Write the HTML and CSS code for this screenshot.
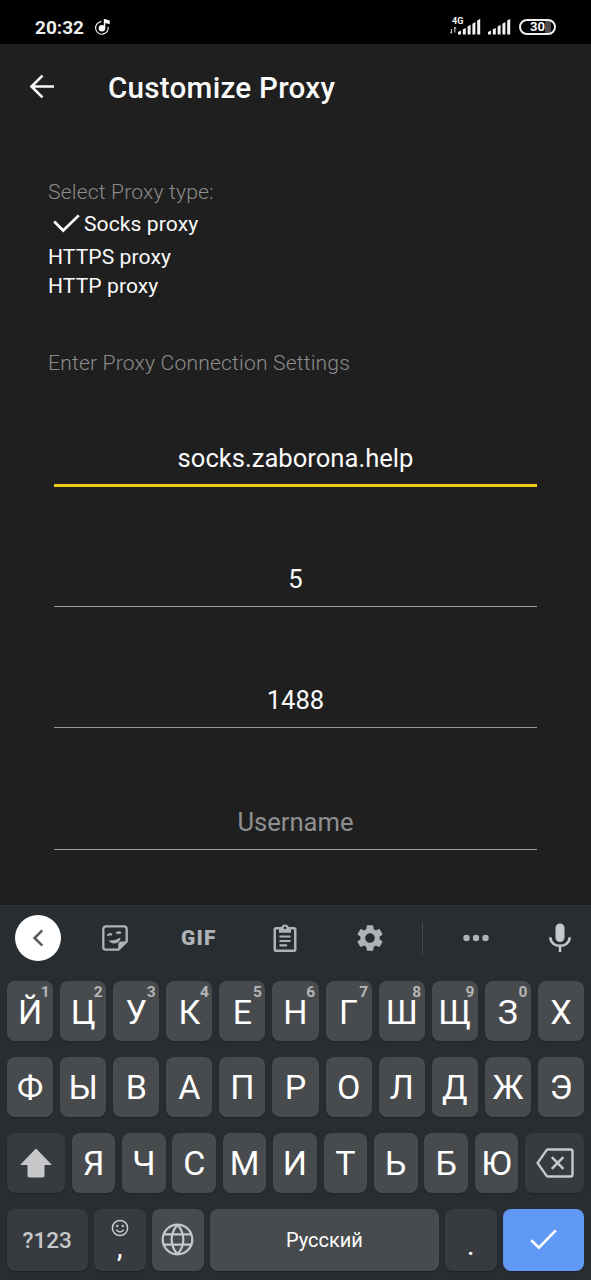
FILE: index.html
```html
<!DOCTYPE html>
<html lang="en">
<head>
<meta charset="utf-8">
<title>Customize Proxy</title>
<link rel="stylesheet" href="styles.css">
</head>
<body>
<div class="status">
  <span class="clock">20:32</span>
  <svg class="music" width="16" height="18" viewBox="0 0 16 18"><path d="M6.5 3.6a6.3 6.3 0 1 0 6.6 5.2" fill="none" stroke="#fff" stroke-width="1.1"/><circle cx="7" cy="10.2" r="3.3" fill="#fff"/><path d="M8.8 10V.8l5.9 1.7v3.8L10.3 5v5z" fill="#fff"/></svg>
  <div class="network">
    <span class="gen">4G</span>
    <svg width="7" height="9" viewBox="0 0 7 9"><path d="M1.5 3v4M4.8 1v5.5" stroke="#ccc" stroke-width="1.1"/><path d="M0 5.5 1.5 7.5M6.3 3 4.8 1" stroke="#ccc" stroke-width="1"/></svg>
  </div>
  <svg class="signal" width="23" height="17" viewBox="0 0 23 17"><path d="M0 16.5V14l3-1.5v4zM4.800 16.500v-5.200l3-1.400v6.600zM9.600 16.500V8.500l3-1.800v9.800zM14.400 16.500V5.800l3-1.800v12.500zM19.200 16.500V2.600l3-1.800v15.700z" fill="#f2f2f2"/></svg>
  <svg class="signal second" width="23" height="17" viewBox="0 0 23 17"><path d="M0 16.500V14l3-1.500v4zM4.800 16.500v-5.200l3-1.400v6.600zM9.600 16.500V8.500l3-1.800v9.800zM14.400 16.500V5.800l3-1.800v12.500zM19.200 16.500V2.600l3-1.800v15.700z" fill="#f2f2f2"/></svg>
  <div class="battery"><span class="charge">30</span></div>
</div>
<header class="bar">
  <svg class="back" width="26" height="26" viewBox="0 0 26 26"><path d="M25 12.500H3M13.500 1.600 2.500 12.500l11 10.900" fill="none" stroke="#f7f7f7" stroke-width="2.700"/></svg>
  <h1 class="title">Customize Proxy</h1>
</header>
<main class="page">
  <p class="label">Select Proxy type:</p>
  <ul class="types">
    <li class="type chosen"><svg width="27" height="19" viewBox="0 0 27 19"><path d="m1.200 7.500 9 9L25.800 1.400" fill="none" stroke="#fff" stroke-width="2.700"/></svg>Socks proxy</li>
    <li class="type">HTTPS proxy</li>
    <li class="type">HTTP proxy</li>
  </ul>
  <p class="label settings">Enter Proxy Connection Settings</p>
  <div class="field active">socks.zaborona.help</div>
  <div class="field">5</div>
  <div class="field">1488</div>
  <div class="field hint">Username</div>
</main>
<section class="keyboard" lang="ru">
  <div class="tools">
    <span class="collapse"><svg width="12" height="18" viewBox="0 0 12 18"><path d="M10.300 1.400 2.600 9l7.700 7.600" fill="none" stroke="#5b5d5f" stroke-width="2.600"/></svg></span>
    <svg class="tool sticker" width="26" height="26" viewBox="0 0 26 26"><path d="M4 1.300h18a2.700 2.700 0 0 1 2.700 2.700v12.500l-8.200 8.200H4A2.700 2.700 0 0 1 1.300 22V4A2.700 2.700 0 0 1 4 1.300z" fill="none" stroke="#b0b3b5" stroke-width="2.300"/><path d="M16.300 25v-5.500a3 3 0 0 1 3-3H25zM6.800 15.200q6.500 1 11.700-2.600c-.2 6.600-9 8-11.700 2.600z" fill="#b0b3b5"/><path d="M5.700 10.800q1.500-2.600 4.200-1M14.500 8.600q2-2.400 4.300-.3" fill="none" stroke="#b0b3b5" stroke-width="2.300"/></svg>
    <span class="gif">GIF</span>
    <svg class="tool clipboard" width="24" height="29" viewBox="0 0 24 29"><path fill-rule="evenodd" d="M3 3h5.300a4 4 0 0 1 7.400 0H21a2.500 2.500 0 0 1 2.500 2.500v20A2.500 2.500 0 0 1 21 28H3a2.500 2.500 0 0 1-2.500-2.500v-20A2.500 2.500 0 0 1 3 3zm0 2.500v20h18v-20h-3v3.200H6V5.500zM12 2.500a1.400 1.400 0 1 0 .01 0z" fill="#b0b3b5"/><path d="M6.500 12.500h11M6.500 17h11M6.500 21.400h7.500" stroke="#b0b3b5" stroke-width="2.100"/></svg>
    <svg class="tool gear" width="32" height="32" viewBox="0 0 24 24"><path fill="#b0b3b5" d="M19.140 12.940c.04-.3.06-.61.06-.94 0-.32-.02-.64-.07-.94l2.030-1.580c.18-.14.23-.41.12-.61l-1.920-3.320c-.12-.22-.37-.29-.59-.22l-2.390.96c-.5-.38-1.030-.7-1.620-.94l-.36-2.540c-.04-.24-.24-.41-.48-.41h-3.840c-.24 0-.43.17-.47.41l-.36 2.540c-.59.24-1.130.57-1.620.94l-2.390-.96c-.22-.08-.47 0-.59.22L2.740 8.870c-.12.21-.08.47.12.61l2.030 1.580c-.05.3-.09.63-.09.94s.02.64.07.94l-2.030 1.580c-.18.14-.23.41-.12.61l1.920 3.320c.12.22.37.29.59.22l2.390-.96c.5.38 1.030.7 1.620.94l.36 2.540c.05.24.24.41.48.41h3.840c.24 0 .44-.17.47-.41l.36-2.540c.59-.24 1.130-.56 1.620-.94l2.390.96c.22.08.47 0 .59-.22l1.920-3.320c.12-.22.07-.47-.12-.61l-2.010-1.580zM12 15.600c-1.980 0-3.600-1.620-3.600-3.600s1.620-3.600 3.600-3.600 3.600 1.620 3.600 3.600-1.620 3.600-3.600 3.600z"/></svg>
    <span class="rule"></span>
    <svg class="tool dots" width="26" height="8" viewBox="0 0 26 8"><g fill="#b0b3b5"><circle cx="3.500" cy="4" r="3.200"/><circle cx="13" cy="4" r="3.200"/><circle cx="22.500" cy="4" r="3.200"/></g></svg>
    <svg class="tool mic" width="22" height="30" viewBox="0 0 22 30"><rect x="6.500" y=".5" width="9" height="18.500" rx="4.500" fill="#c6c8ca"/><path d="M1.300 14.300c0 11.300 19.400 11.300 19.400 0M11 22.500V29" fill="none" stroke="#c6c8ca" stroke-width="2.500"/></svg>
  </div>
  <div class="keys eleven numbered">
    <div class="key">Й<sup class="alt">1</sup></div><div class="key">Ц<sup class="alt">2</sup></div><div class="key">У<sup class="alt">3</sup></div><div class="key">К<sup class="alt">4</sup></div><div class="key">Е<sup class="alt">5</sup></div><div class="key">Н<sup class="alt">6</sup></div><div class="key">Г<sup class="alt">7</sup></div><div class="key">Ш<sup class="alt">8</sup></div><div class="key">Щ<sup class="alt">9</sup></div><div class="key">З<sup class="alt">0</sup></div><div class="key">Х</div>
  </div>
  <div class="keys eleven">
    <div class="key">Ф</div><div class="key">Ы</div><div class="key">В</div><div class="key">А</div><div class="key">П</div><div class="key">Р</div><div class="key">О</div><div class="key">Л</div><div class="key">Д</div><div class="key">Ж</div><div class="key">Э</div>
  </div>
  <div class="keys shifted">
    <div class="key dark"><svg width="32" height="30" viewBox="0 0 32 30"><path d="M16 1 31 16.500h-7V28q0 1-1 1H9q-1 0-1-1V16.500H1z" fill="#c6c8ca" stroke="#c6c8ca" stroke-width="1" stroke-linejoin="round"/></svg></div>
    <div class="key">Я</div><div class="key">Ч</div><div class="key">С</div><div class="key">М</div><div class="key">И</div><div class="key">Т</div><div class="key">Ь</div><div class="key">Б</div><div class="key">Ю</div>
    <div class="key dark"><svg width="38" height="30" viewBox="0 0 38 30"><path d="M12 1.500h22.500a2 2 0 0 1 2 2v23a2 2 0 0 1-2 2H12q-1 0-1.600-.9L1.600 15l8.800-12.600q.6-.9 1.600-.9z" fill="none" stroke="#c6c8ca" stroke-width="2.400"/><path d="m15.800 9.200 11.600 11.600m0-11.600L15.800 20.800" stroke="#c6c8ca" stroke-width="2.500"/></svg></div>
  </div>
  <div class="keys bottom">
    <div class="key dark mode">?123</div>
    <div class="key dark comma"><svg width="18" height="18" viewBox="0 0 18 18"><circle cx="9" cy="9" r="7.600" fill="none" stroke="#c6c8ca" stroke-width="1.500"/><circle cx="6.300" cy="7" r="1.200" fill="#c6c8ca"/><circle cx="11.700" cy="7" r="1.200" fill="#c6c8ca"/><path d="M5.200 10.800q3.800 4.400 7.600 0" fill="none" stroke="#c6c8ca" stroke-width="1.500"/></svg><span class="mark">,</span></div>
    <div class="key"><svg width="33" height="33" viewBox="0 0 33 33"><g fill="none" stroke="#c6c8ca" stroke-width="2.200"><circle cx="16.500" cy="16.500" r="14.800"/><path d="M3 11.300h27M3 21.700h27M16.500 1.700c-7.800 9-7.800 20.600 0 29.600M16.500 1.700c7.800 9 7.800 20.600 0 29.600"/></g></svg></div>
    <div class="key space">Русский</div>
    <div class="key dark dot"><span class="mark">.</span></div>
    <div class="key enter"><svg width="27" height="21" viewBox="0 0 27 21"><path d="m1.200 11.200 7.700 7.500L25.800 1.400" fill="none" stroke="#fff" stroke-width="2.700"/></svg></div>
  </div>
</section>
</body>
</html>
```

FILE: styles.css
```css
* { box-sizing: border-box; }

body {
  margin: 0;
  width: 591px;
  height: 1280px;
  display: flex;
  flex-direction: column;
  overflow: hidden;
  background: #1f1f1f;
  color: #fafafa;
  font-family: Roboto, "Noto Sans", sans-serif;
}

svg { display: block; flex: none; }

.status {
  height: 44px;
  flex: none;
  display: flex;
  align-items: flex-start;
  padding-left: 35px;
  background: #000;
}
.clock { width: 60px; font-size: 19px; line-height: 22px; font-weight: 700; margin-top: 17px; color: #eee; }
.music { margin-top: 18px; }
.network { margin: 17px 0 0 339px; width: 8px; display: flex; flex-direction: column; }
.gen { margin-left: 2px; font-size: 9px; line-height: 9px; font-weight: 700; }
.signal { margin: 18px 0 0; }
.second { margin-left: 7px; }
.battery {
  width: 37px;
  height: 16px;
  margin: 19px 0 0 8px;
  padding: 1px;
  border: 2px solid #f0f0f0;
  border-radius: 8px;
  background: linear-gradient(90deg, #000 72%, #4c4c4c 72% 92%, #000 92%);
  display: flex;
  align-items: center;
  justify-content: center;
}
.charge { font-size: 13px; line-height: 12px; font-weight: 700; }

.bar { height: 87px; flex: none; display: flex; align-items: center; padding-left: 29px; border-bottom: 1px solid #1c1c1c; }
.title { margin: 2px 0 0 53px; font-size: 29.6px; line-height: 36px; font-weight: 500; letter-spacing: .26px; }

.page { flex: none; height: 774px; padding: 48px 48px 0; font-size: 21.1px; line-height: 26px; }
.label { margin: 0; color: #8c8c8c; font-weight: 300; letter-spacing: .17px; }
.types { margin: 0; padding: 0; list-style: none; letter-spacing: .07px; }
.type { height: 29px; line-height: 29px; }
.chosen { height: 37px; padding-left: 5px; display: flex; align-items: center; gap: 4px; }
.settings { margin-top: 50px; }
.field {
  height: 43px;
  margin: 78.400px 6px 0;
  padding-bottom: 12px;
  border-bottom: 1px solid #999;
  font-size: 25.6px;
  line-height: 30px;
  text-align: center;
}
.active { height: 44px; margin-top: 67px; border-bottom: 3px solid #f2ca1a; }
.active + .field { margin-top: 77px; }
.hint { color: #8f8f8f; }

.keyboard {
  flex: 1;
  display: flex;
  flex-direction: column;
  gap: 15.500px;
  padding: 0 7px 9px;
  border-top: 2px solid #2f3133;
  background: #282d31;
}
.tools { height: 58px; flex: none; display: flex; align-items: center; padding: 4px 0 0 8px; }
.collapse { width: 46px; height: 46px; border-radius: 50%; background: #fff; display: flex; align-items: center; justify-content: center; }
.sticker { margin-left: 41px; }
.gif { width: 37px; margin-left: 53px; font-size: 21px; line-height: 24px; font-weight: 900; letter-spacing: 1.200px; color: #b0b3b5; }
.clipboard { margin-left: 55px; }
.gear { margin-left: 57px; }
.rule { width: 1px; height: 33px; margin-left: 36px; background: #41464f; }
.dots { margin-left: 40px; }
.mic { margin-left: 60px; }

.keys { display: grid; height: 60.500px; flex: none; gap: 7px; }
.eleven { grid-template-columns: repeat(11, 1fr); }
.shifted { grid-template-columns: 58px repeat(9, 1fr) 59px; gap: 6.700px; }
.bottom { grid-template-columns: 80.500px 52px 52px 1fr 52px 81px; gap: 6.200px; height: 62.500px; }
.key {
  position: relative;
  display: flex;
  align-items: center;
  justify-content: center;
  border-radius: 8px;
  background: #484b4d;
  box-shadow: 0 1px 1px #202427;
  color: #fff;
  font-size: 34px;
  line-height: 40px;
}
.numbered .key { padding-top: 2px; }
.alt { position: absolute; top: 2px; right: 3.500px; font-size: 15.500px; line-height: 18px; font-weight: 700; color: #b4b6b8; }
.dark { background: #373b3f; }
.mode { font-size: 22.500px; font-weight: 500; color: #c6c8ca; }
.comma { flex-direction: column; justify-content: flex-start; padding-top: 10px; }
.mark { font-size: 25px; line-height: 24px; font-weight: 500; }
.dot { align-items: flex-end; padding-bottom: 12px; }
.space { font-size: 20px; }
.enter { background: #6098f5; }
```
